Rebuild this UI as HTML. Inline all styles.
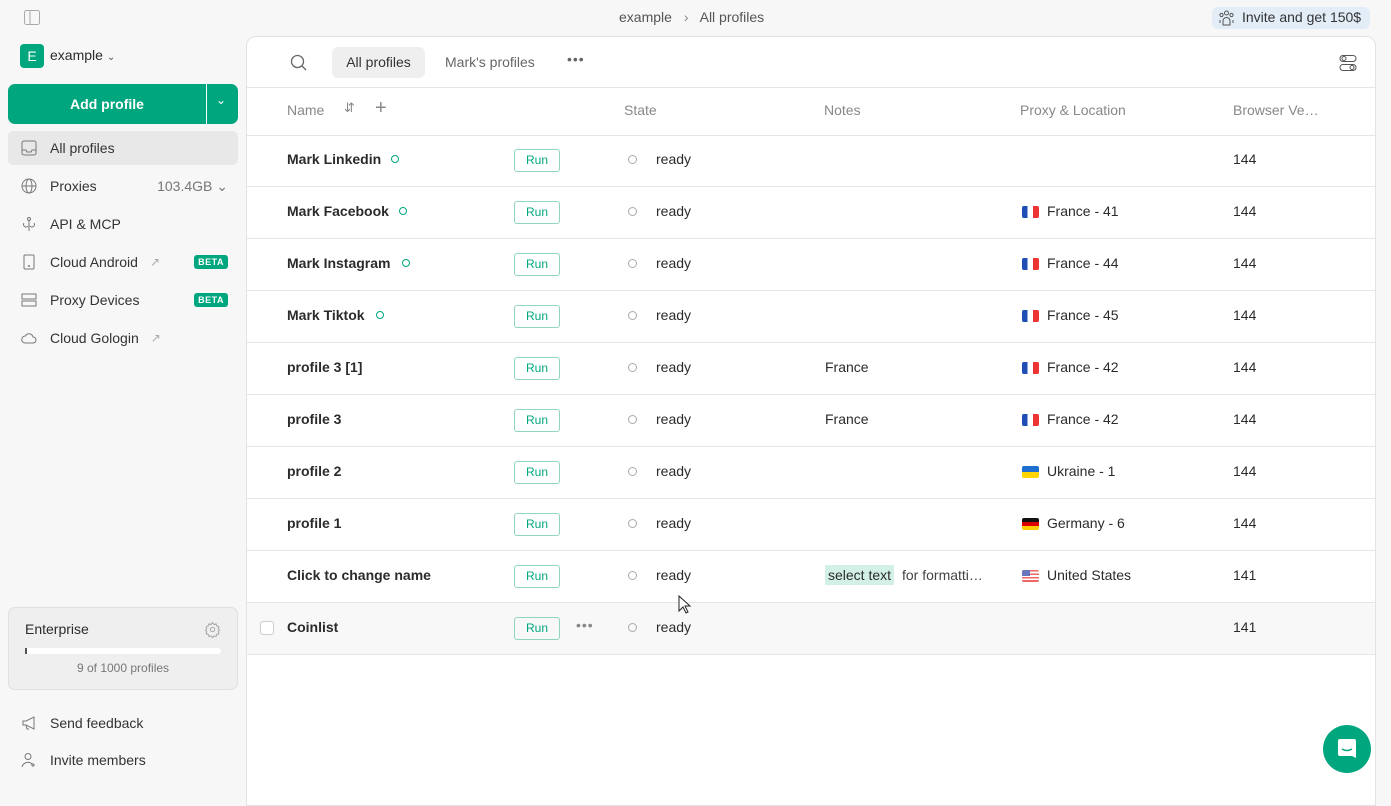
<!DOCTYPE html>
<html><head><meta charset="utf-8"><style>
*{box-sizing:border-box;margin:0;padding:0}
body{width:1391px;height:793px;overflow:hidden;background:#f7f7f7;font-family:"Liberation Sans",sans-serif;color:#2b2b2b;position:relative;font-size:14px}
.abs{position:absolute}
.nav{position:absolute;left:8px;width:230px;height:34px;display:flex;align-items:center;padding-left:42px;font-size:14px;color:#333}
.nav svg{position:absolute;left:13px;top:9px}
.beta{position:absolute;right:10px;top:10px;background:#00a67e;color:#fff;font-size:9px;font-weight:bold;padding:2px 4px;border-radius:3px;letter-spacing:.5px}
.main{position:absolute;left:246px;top:36px;width:1130px;height:770px;background:#fff;border:1px solid #e3e3e3;border-radius:10px 10px 0 0}
.row{position:absolute;left:0;width:1128px;height:52px;border-bottom:1px solid #e6e6e6;font-size:14px}
.row>*{position:absolute}
.nm{left:40px;top:16px;font-weight:600;color:#2b2b2b}
.run{left:267px;top:14px;width:46px;height:23px;border:1px solid #8fd5c2;border-radius:3px;color:#00a67e;font-size:12px;text-align:center;line-height:21px}
.sd{left:381px;top:20px;width:9px;height:9px;border:1px solid #aaa;border-radius:50%}
.rd{left:409px;top:16px}
.nt{left:578px;top:16px}
.fl{left:775px;top:19px;width:17px;height:12px;border-radius:2px;overflow:hidden}
.px{left:800px;top:16px}
.bv{left:986px;top:16px}
.gd{width:8px;height:8px;border:1.5px solid #00a67e;border-radius:50%;top:20px}
</style></head><body>
<svg class="abs" style="left:24px;top:10px" width="16" height="15" viewBox="0 0 16 15"><rect x="0.5" y="0.5" width="15" height="14" rx="2" fill="none" stroke="#aaa"/><line x1="6" y1="1" x2="6" y2="14" stroke="#aaa"/></svg>
<div class="abs" style="left:619px;top:9px;font-size:14px;color:#555">example <span style="margin:0 8px;color:#888">›</span> All profiles</div>
<div class="abs" style="left:1212px;top:7px;width:158px;height:22px;background:#e2edf8;border-radius:6px;font-size:14px;color:#333;padding:2px 0 0 30px">Invite and get 150$</div>
<svg class="abs" style="left:1218px;top:10px" width="17" height="16" viewBox="0 0 17 16" fill="none" stroke="#555"><circle cx="8.5" cy="3" r="2"/><circle cx="3.5" cy="5" r="1.6"/><circle cx="13.5" cy="5" r="1.6"/><path d="M5 15v-4a3.5 3.5 0 017 0v4z"/><path d="M2 13v-3m13 3v-3"/></svg>
<div class="abs" style="left:20px;top:44px;width:24px;height:24px;background:#00a67e;border-radius:4px;color:#fff;text-align:center;line-height:24px;font-size:14px">E</div>
<div class="abs" style="left:50px;top:47px;font-size:14px">example <span style="font-size:10px;color:#555">⌄</span></div>
<div class="abs" style="left:8px;top:84px;width:230px;height:40px;background:#00a67e;border-radius:7px"></div>
<div class="abs" style="left:8px;top:84px;width:198px;height:40px;color:#fff;font-weight:bold;font-size:14px;text-align:center;line-height:40px">Add profile</div>
<div class="abs" style="left:206px;top:84px;width:1px;height:40px;background:#fff"></div>
<div class="abs" style="left:216px;top:93px;color:#fff;font-size:12px">⌄</div>
<div class="nav" style="top:131px;background:#e8e8e8;border-radius:5px">All profiles<svg width="16" height="16" viewBox="0 0 16 16" fill="none" stroke="#777"><rect x="1" y="1" width="14" height="14" rx="2"/><path d="M1 10h4l1 2h4l1-2h4"/></svg></div>
<div class="nav" style="top:169px">Proxies<span style="position:absolute;right:10px;color:#777">103.4GB ⌄</span><svg width="16" height="16" viewBox="0 0 16 16" fill="none" stroke="#777"><circle cx="8" cy="8" r="7"/><ellipse cx="8" cy="8" rx="3" ry="7"/><path d="M1 8h14"/></svg></div>
<div class="nav" style="top:207px">API &amp; MCP<svg width="16" height="16" viewBox="0 0 16 16" fill="none" stroke="#777"><circle cx="8" cy="3" r="1.5"/><path d="M8 5v10M3 7a2 2 0 104 3M13 7a2 2 0 11-4 3"/></svg></div>
<div class="nav" style="top:245px">Cloud Android<span style="color:#aaa;margin-left:12px;font-size:12px">↗</span><span class="beta">BETA</span><svg width="16" height="16" viewBox="0 0 16 16" fill="none" stroke="#777"><rect x="3" y="1" width="10" height="14" rx="1"/><circle cx="8" cy="12" r=".5" fill="#777"/></svg></div>
<div class="nav" style="top:283px">Proxy Devices<span class="beta">BETA</span><svg width="16" height="16" viewBox="0 0 16 16" fill="none" stroke="#777"><rect x="1" y="2" width="14" height="5"/><rect x="1" y="9" width="14" height="5"/></svg></div>
<div class="nav" style="top:321px">Cloud Gologin<span style="color:#aaa;margin-left:12px;font-size:12px">↗</span><svg width="16" height="16" viewBox="0 0 16 16" fill="none" stroke="#777"><path d="M4 13h8a3 3 0 000-6 4 4 0 00-7.5-1A3.5 3.5 0 004 13z"/></svg></div>
<div class="abs" style="left:8px;top:607px;width:230px;height:83px;background:#efefef;border:1px solid #e0e0e0;border-radius:7px"></div>
<div class="abs" style="left:25px;top:621px;font-size:14px">Enterprise</div>
<svg class="abs" style="left:204px;top:621px" width="17" height="17" viewBox="0 0 24 24" fill="none" stroke="#aaa" stroke-width="1.5"><circle cx="12" cy="12" r="3"/><path d="M12 2l2 3 3-1 1 3 3 1-1 3 2 2-2 2 1 3-3 1-1 3-3-1-2 3-2-3-3 1-1-3-3-1 1-3-2-2 2-2-1-3 3-1 1-3 3 1z"/></svg>
<div class="abs" style="left:25px;top:648px;width:196px;height:6px;background:#fff;border-radius:3px"><div style="width:2px;height:6px;background:#555"></div></div>
<div class="abs" style="left:8px;top:661px;width:230px;text-align:center;font-size:12px;color:#777">9 of 1000 profiles</div>
<div class="nav" style="top:706px">Send feedback<svg width="16" height="16" viewBox="0 0 16 16" fill="none" stroke="#777"><path d="M2 6h3l8-4v12L5 10H2zM5 10l1 4h2"/></svg></div>
<div class="nav" style="top:743px">Invite members<svg width="16" height="16" viewBox="0 0 16 16" fill="none" stroke="#777"><circle cx="7" cy="4.5" r="3"/><path d="M1 15a6 6 0 0110-3M12 11v4M10 13h4"/></svg></div>
<div class="main">
<svg class="abs" style="left:43px;top:17px" width="18" height="18" viewBox="0 0 18 18" fill="none" stroke="#666" stroke-width="1.3"><circle cx="7.5" cy="7.5" r="6"/><path d="M12 12l4 4"/></svg>
<div class="abs" style="left:85px;top:10px;width:93px;height:31px;background:#efefef;border-radius:6px;text-align:center;line-height:31px;font-size:14px;color:#333">All profiles</div>
<div class="abs" style="left:198px;top:17px;font-size:14px;color:#666">Mark's profiles</div>
<div class="abs" style="left:320px;top:14px;color:#666;font-size:14px;letter-spacing:1px">•••</div>
<svg class="abs" style="left:1092px;top:17px" width="18" height="18" viewBox="0 0 18 18" fill="none" stroke="#555"><rect x="1" y="1.5" width="16" height="6" rx="3"/><rect x="1" y="10.5" width="16" height="6" rx="3"/><circle cx="5" cy="4.5" r="2"/><circle cx="13" cy="13.5" r="2"/></svg>
<div class="abs" style="left:0;top:50px;width:1128px;height:1px;background:#e6e6e6"></div>
<div class="row" style="top:51px;height:48px;color:#888"><span style="left:40px;top:14px">Name</span><span style="left:97px;top:12px;font-size:13px">⇵</span><span style="left:128px;top:9px;font-size:20px;font-weight:300">+</span><span style="left:377px;top:14px">State</span><span style="left:577px;top:14px">Notes</span><span style="left:773px;top:14px">Proxy &amp; Location</span><span style="left:986px;top:14px">Browser Ve…</span></div>

<div class="row" style="top:98px"><span class="nm">Mark Linkedin</span><span class="abs gd" style="left:144px"></span><span class="run">Run</span><span class="sd"></span><span class="rd">ready</span><span class="bv">144</span></div>
<div class="row" style="top:150px"><span class="nm">Mark Facebook</span><span class="abs gd" style="left:152px"></span><span class="run">Run</span><span class="sd"></span><span class="rd">ready</span><span class="fl" style="background:linear-gradient(90deg,#1f4fb5 33%,#fff 33% 66%,#e33 66%)"></span><span class="px">France - 41</span><span class="bv">144</span></div>
<div class="row" style="top:202px"><span class="nm">Mark Instagram</span><span class="abs gd" style="left:155px"></span><span class="run">Run</span><span class="sd"></span><span class="rd">ready</span><span class="fl" style="background:linear-gradient(90deg,#1f4fb5 33%,#fff 33% 66%,#e33 66%)"></span><span class="px">France - 44</span><span class="bv">144</span></div>
<div class="row" style="top:254px"><span class="nm">Mark Tiktok</span><span class="abs gd" style="left:129px"></span><span class="run">Run</span><span class="sd"></span><span class="rd">ready</span><span class="fl" style="background:linear-gradient(90deg,#1f4fb5 33%,#fff 33% 66%,#e33 66%)"></span><span class="px">France - 45</span><span class="bv">144</span></div>
<div class="row" style="top:306px"><span class="nm">profile 3 [1]</span><span class="run">Run</span><span class="sd"></span><span class="rd">ready</span><span class="nt">France</span><span class="fl" style="background:linear-gradient(90deg,#1f4fb5 33%,#fff 33% 66%,#e33 66%)"></span><span class="px">France - 42</span><span class="bv">144</span></div>
<div class="row" style="top:358px"><span class="nm">profile 3</span><span class="run">Run</span><span class="sd"></span><span class="rd">ready</span><span class="nt">France</span><span class="fl" style="background:linear-gradient(90deg,#1f4fb5 33%,#fff 33% 66%,#e33 66%)"></span><span class="px">France - 42</span><span class="bv">144</span></div>
<div class="row" style="top:410px"><span class="nm">profile 2</span><span class="run">Run</span><span class="sd"></span><span class="rd">ready</span><span class="fl" style="background:linear-gradient(#1f6fd0 50%,#ffd500 50%)"></span><span class="px">Ukraine - 1</span><span class="bv">144</span></div>
<div class="row" style="top:462px"><span class="nm">profile 1</span><span class="run">Run</span><span class="sd"></span><span class="rd">ready</span><span class="fl" style="background:linear-gradient(#111 33%,#d00 33% 66%,#fc0 66%)"></span><span class="px">Germany - 6</span><span class="bv">144</span></div>
<div class="row" style="top:514px"><span class="nm">Click to change name</span><span class="run">Run</span><span class="sd"></span><span class="rd">ready</span><span class="nt" style="left:578px;top:14px;background:#d3f0e7;padding:2px 3px">select text</span><span style="left:655px;top:16px;color:#444">for formatti…</span><span class="fl" style="background:repeating-linear-gradient(#e66 0 1.7px,#fff 1.7px 3.4px)"><span style="position:absolute;left:0;top:0;width:8px;height:6px;background:#6677bb"></span></span><span class="px">United States</span><span class="bv">141</span></div>
<div class="row" style="top:566px;background:#f8f8f8"><span style="left:13px;top:18px;width:14px;height:14px;border:1px solid #ccc;border-radius:3px;background:#fff"></span><span class="nm">Coinlist</span><span class="run">Run</span><span style="left:329px;top:14px;color:#888;letter-spacing:1px">•••</span><span class="sd"></span><span class="rd">ready</span><span class="bv">141</span></div>
</div>
<svg class="abs" style="left:678px;top:595px" width="14" height="20" viewBox="0 0 14 20"><path d="M1 1v15l4-4 3 6 2-1-3-6h5z" fill="#fff" stroke="#222"/></svg>
<div class="abs" style="left:1323px;top:725px;width:48px;height:48px;border-radius:50%;background:#00a67e"></div>
<svg class="abs" style="left:1335px;top:737px" width="24" height="24" viewBox="0 0 24 24"><path d="M3 4a2 2 0 012-2h14a2 2 0 012 2v17l-4-2H5a2 2 0 01-2-2z" fill="#fff"/><path d="M7 12q5 3 10 0" fill="none" stroke="#00a67e" stroke-width="1.5"/></svg>
</body></html>
